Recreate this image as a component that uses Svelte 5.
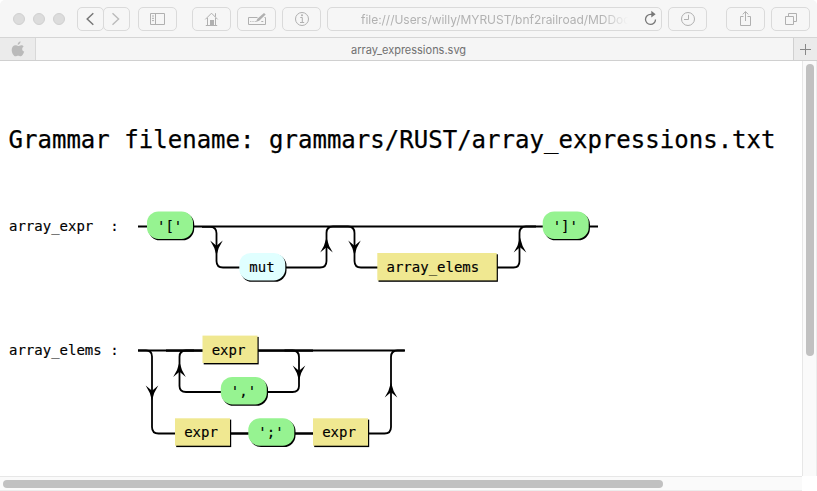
<script>
  const arrows = [
    { x: 216.5, y: 253, up: false },
    { x: 326.5, y: 240, up: true },
    { x: 354.5, y: 253, up: false },
    { x: 520, y: 240, up: true },
    { x: 152, y: 398, up: false },
    { x: 179.5, y: 364.5, up: true },
    { x: 299, y: 378, up: false },
    { x: 391, y: 385, up: true }
  ];

  const nodes = [
    { x: 147, y: 211.5, w: 46, label: "'['", kind: 'terminal' },
    { x: 239.3, y: 253, w: 46, label: 'mut', kind: 'keyword' },
    { x: 377.3, y: 253, w: 119.4, label: 'array_elems', kind: 'rule' },
    { x: 542.7, y: 211.5, w: 46, label: "']'", kind: 'terminal' },
    { x: 202.5, y: 335.6, w: 55, label: 'expr', kind: 'rule' },
    { x: 220.8, y: 377, w: 46, label: "','", kind: 'terminal' },
    { x: 175, y: 418.3, w: 55, label: 'expr', kind: 'rule' },
    { x: 248.3, y: 418.3, w: 46, label: "';'", kind: 'terminal' },
    { x: 313, y: 418.3, w: 55, label: 'expr', kind: 'rule' }
  ];
</script>

<div class="window">
  <header class="toolbar">
    <div class="lights"><i></i><i></i><i></i></div>
    <div class="nav">
      <button aria-label="Back"><svg width="26" height="24"><path class="dark" d="M16.3 6.2 10.2 12l6.1 5.8" /></svg></button>
      <button aria-label="Forward"><svg width="26" height="24"><path class="pale" d="M9.5 6.2 15.6 12l-6.1 5.8" /></svg></button>
    </div>
    <button class="btn side" aria-label="Sidebar">
      <svg width="37" height="22"><path d="M11.5 5.5h14v11h-14zM16.5 5.5v11M13 8h2M13 10.3h2M13 12.6h2" /></svg>
    </button>
    <button class="btn home" aria-label="Home">
      <svg width="37" height="22"><path d="M12.3 11.4 18.5 5.2l6.2 6.2M14.5 10v7M22.5 10v7M12.8 17.500h11.400M22.500 5.200v3.600" /><path class="fill" d="M17 12h4v5h-4z" /></svg>
    </button>
    <button class="btn edit" aria-label="Edit">
      <svg width="37" height="22"><path d="M19.5 9.5h-9v7h17v-7h-1" /><path d="M12.3 13.500h1M14.500 13.500h1M16.700 13.500h1M23.300 13.500h2" /><path class="fill" d="m17.8 14 1.6-3.2 6.6-5.9 1.7 1.6-6.5 6.3z" /></svg>
    </button>
    <button class="btn info" aria-label="Info">
      <svg width="37" height="22"><circle cx="19" cy="11" r="6.5" /><path d="M17.3 9.500h2v5M17 14.500h4.200" /><circle class="fill" cx="19" cy="7.200" r="1" /></svg>
    </button>
    <div class="address">
      <span class="url">file:///Users/willy/MYRUST/bnf2railroad/MDDocs</span>
      <svg width="18" height="22"><path class="reload" d="M11.6 6.4H9.7a5 5 0 1 0 4.8 5" /><path class="darkfill" d="M10.3 2.8v6.8l4.3-3.4z" /></svg>
    </div>
    <button class="btn clock" aria-label="History">
      <svg width="37" height="22"><circle cx="19" cy="11" r="6.5" /><path d="M19.5 6.8v4.7H15" /></svg>
    </button>
    <button class="btn share" aria-label="Share">
      <svg width="37" height="22"><path d="M16.5 8.5h-3v9h10v-9h-3M18.5 13V3.7M15.7 6.4l2.8-2.8 2.8 2.8" /></svg>
    </button>
    <button class="btn tabs" aria-label="Tabs">
      <svg width="37" height="22"><path d="M13.5 8.5h8v8h-8zM16.5 8V5.5h8v8H22" /></svg>
    </button>
  </header>

  <div class="tabbar">
    <div class="pin">
      <svg width="14" height="16" viewBox="0 0 14 16"><path class="apple" d="M9.5.3C9.7 2 8.4 3.7 6.7 3.8 6.5 2.1 8 .5 9.5.3zM12.7 5.4c-2.2 1.3-1.9 4.2.5 5.2-.6 1.9-1.8 4.7-3.5 4.7-1 0-1.4-.6-2.6-.6s-1.7.6-2.6.6C2.7 15.3.7 11.9.7 9c0-2.9 1.8-4.7 3.8-4.7 1.1 0 1.9.7 2.7.7s1.7-.8 3-.8c1.1 0 2 .5 2.5 1.200z" /></svg>
    </div>
    <div class="title"><span>array_expressions.svg</span></div>
    <div class="plus"><svg width="16" height="22"><path class="plusline" d="M2 11.5h11M7.5 6v11" /></svg></div>
  </div>

  <div class="body">
    <svg class="diagram" width="802" height="415" viewBox="0 61 802 415">
      <text class="heading" x="8.5" y="147.7" textLength="767">Grammar filename: grammars/RUST/array_expressions.txt</text>
      <text x="9" y="231">array_expr  :</text>
      <text x="9" y="355">array_elems :</text>

      <g class="rail">
        <path d="M138 226.500H598" />
        <path d="M202 226.800h8q6.500 0 6.500 6.500V261q0 6.500 6.500 6.500h97q6.500 0 6.500-6.500V233q0-6.500 6.500-6.500h15q6.500 0 6.500 6.500V261q0 6.500 6.500 6.500h152.500q6 0 6-6.500V233q0-6.500 6.500-6.500h10" />
        <path d="M138 350.500H405" />
        <path class="strong" d="M166 350.600h147" />
        <path d="M138 350.500h8q6 0 6 6V427q0 6.500 6.500 6.500h226q6.500 0 6.500-6.500V357q0-6.500 6.500-6.500h7" />
        <path d="M194 350.500h-8q-6.500 0-6.500 6.500V386q0 6 6.500 6h106.500q6.500 0 6.500-6v-29q0-6.500-6.500-6.500h-8" />
        <path class="strong" d="M230 433.500h84" />
      </g>
      {#each arrows as a}
        <path class="arrow" transform="translate({a.x} {a.y}) scale(1 {a.up ? -1 : 1})" d="M0 2.500Q-1.800-6-6.300-12.500L0-7.300 6.300-12.500Q1.800-6 0 2.500z" />
      {/each}
      {#each nodes as n}
        <rect class="shadow" x={n.x + 1.2} y={n.y + 1.3} width={n.w} height="27.5" rx={n.kind === 'rule' ? 0 : 11.5} />
        <rect class={n.kind} x={n.x} y={n.y} width={n.w} height="27.4" rx={n.kind === 'rule' ? 0 : 11.5} />
        <text x={n.x + (n.kind === 'rule' ? 9.2 : 10)} y={n.y + 19}>{n.label}</text>
      {/each}
    </svg>
    <div class="vscroll"><div class="thumb"></div></div>
  </div>
  <div class="hscroll"><div class="thumb"></div></div>
</div>

<style>
  :global(body) { background: #fff; }
  .window { width: 817px; height: 491px; display: flex; flex-direction: column; overflow: hidden; font-family: Inter, "Liberation Sans", sans-serif; background: #fff; }
  svg { display: block; }
  .toolbar { box-sizing: border-box; height: 38px; flex: none; display: flex; align-items: flex-start; padding: 7px 6px 0 13px; background: #f6f6f6; border-bottom: 1px solid #d5d5d5; border-radius: 5px 5px 0 0; }
  .toolbar path, .toolbar circle { fill: none; stroke: #b0b0b0; stroke-width: 1; }
  .toolbar path.dark { stroke: #777; stroke-width: 1.5; }
  .toolbar path.pale { stroke: #bbb; stroke-width: 1.4; }
  .toolbar .fill { fill: #b0b0b0; stroke: none; }
  .toolbar .reload { stroke: #777; stroke-width: 1.3; }
  .toolbar .darkfill { fill: #777; stroke: none; }
  .lights { display: flex; gap: 8px; margin: 6px 12px 0 0; }
  .lights i { box-sizing: border-box; width: 12px; height: 12px; border-radius: 50%; background: #dcdcdc; border: 1px solid #d0d0d0; }
  button { padding: 0; background: #f6f6f6; border: 1px solid #dadada; border-radius: 5px; }
  .nav { display: flex; }
  .nav button { box-sizing: border-box; width: 27px; height: 24px; }
  .nav button + button { margin-left: -1px; }
  .nav svg { margin: -1px 0 0 -1px; }
  .btn { box-sizing: border-box; width: 39px; height: 24px; flex: none; }
  .side { margin-left: 8px; }
  .home { margin-left: 15px; }
  .edit, .info, .clock, .tabs { margin-left: 6px; }
  .share { margin-left: 19px; }
  .address { box-sizing: border-box; width: 335px; height: 24px; margin-left: 6px; border: 1px solid #dadada; border-radius: 5px; display: flex; padding-left: 33px; }
  .url { flex: none; width: 274px; white-space: nowrap; font-size: 12px; line-height: 23px; letter-spacing: -0.03px; color: #b2b2b2; mask-image: linear-gradient(to right, #000 240px, transparent 267px); }
  .address svg { margin-left: 6px; }
  .tabbar { box-sizing: border-box; height: 23px; flex: none; display: flex; background: #f5f5f5; border-bottom: 1px solid #d0d0d0; }
  .pin { box-sizing: border-box; width: 36px; padding: 3px 0 0 11px; background: #ebebeb; border-right: 1px solid #d8d8d8; }
  .apple { fill: #bababa; }
  .title { flex: 1; display: flex; padding-left: 315px; font-size: 11px; line-height: 24px; height: 22px; color: #707070; }
  .plus { box-sizing: border-box; width: 24px; padding-left: 4px; background: #ebebeb; border-left: 1px solid #d0d0d0; }
  .plusline { stroke: #888; }
  .body { height: 415px; flex: none; display: flex; }
  .diagram text { font: 14px "DejaVu Sans Mono", monospace; fill: #000; stroke: #000; stroke-width: 0.15; white-space: pre; }
  .diagram text.heading { font-size: 24px; stroke-width: 0.25; }
  .rail path { fill: none; stroke: #000; stroke-width: 1.8; }
  .rail path.strong { stroke-width: 2.1; }
  .arrow { fill: #000; }
  .shadow { fill: #000; }
  .terminal { fill: #96f391; }
  .keyword { fill: #e0ffff; }
  .rule { fill: #f0e891; }
  .vscroll { box-sizing: border-box; width: 15px; background: #fafafa; border-left: 1px solid #e7e7e7; border-right: 1px solid #ececec; padding: 3px 0 0 3px; }
  .vscroll .thumb { width: 8px; height: 292px; border-radius: 4px; background: #c1c1c1; }
  .hscroll { box-sizing: border-box; width: 802px; height: 15px; background: #fafafa; border-top: 1px solid #e7e7e7; border-bottom: 1px solid #ececec; padding: 3px 0 0 3px; }
  .hscroll .thumb { width: 660px; height: 8px; border-radius: 4px; background: #c1c1c1; }
</style>
